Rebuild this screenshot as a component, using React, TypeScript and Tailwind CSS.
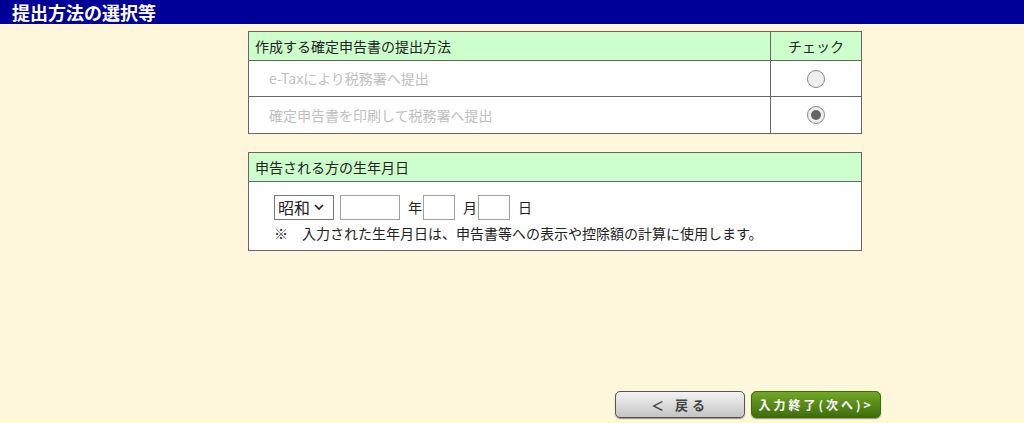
import React, { useState } from 'react';

const Radio: React.FC<{ checked: boolean; onClick: () => void }> = ({ checked, onClick }) => (
  <button
    type="button"
    onClick={onClick}
    className="w-[18px] h-[18px] rounded-full border border-[#8a8a8a] bg-[#efefef] flex items-center justify-center"
  >
    {checked && <span className="block w-[10px] h-[10px] rounded-full bg-[#666666]" />}
  </button>
);

const App: React.FC = () => {
  const [method, setMethod] = useState<'etax' | 'print'>('print');

  return (
    <div
      className="w-[1024px] h-[423px] bg-[#fff7dc] flex flex-col text-[14px] text-[#222]"
      style={{ fontFamily: '"Noto Sans CJK JP", "Noto Sans", sans-serif' }}
    >
      {/* Title bar */}
      <div className="h-[24px] bg-[#000099] flex items-center pl-[12px]">
        <h1 className="text-white font-bold text-[18px] leading-none">提出方法の選択等</h1>
      </div>

      <div className="flex-1 flex flex-col items-start pl-[248px] pt-[7px]">
        {/* Submission method */}
        <table className="w-[614px] border-collapse border border-[#666]">
          <thead>
            <tr className="bg-[#ccffcc] h-[29px]">
              <th className="border border-[#666] text-left font-normal pl-[6px]">作成する確定申告書の提出方法</th>
              <th className="border border-[#666] font-normal w-[91px]">チェック</th>
            </tr>
          </thead>
          <tbody className="bg-white">
            <tr className="h-[36px]">
              <td className="border border-[#666] pl-[20px] text-[#c0c0c0]">e-Taxにより税務署へ提出</td>
              <td className="border border-[#666]">
                <div className="flex justify-center">
                  <Radio checked={method === 'etax'} onClick={() => setMethod('etax')} />
                </div>
              </td>
            </tr>
            <tr className="h-[37px]">
              <td className="border border-[#666] pl-[20px] text-[#c0c0c0]">確定申告書を印刷して税務署へ提出</td>
              <td className="border border-[#666]">
                <div className="flex justify-center">
                  <Radio checked={method === 'print'} onClick={() => setMethod('print')} />
                </div>
              </td>
            </tr>
          </tbody>
        </table>

        {/* Birth date */}
        <div className="w-[614px] mt-[18px] border border-[#666]">
          <div className="h-[29px] bg-[#ccffcc] border-b border-[#666] flex items-center pl-[6px]">
            申告される方の生年月日
          </div>
          <div className="bg-white h-[68px] pl-[25px] pt-[12px]">
            <div className="flex items-center h-[26px]">
              <div className="w-[60px] h-[25px] border border-[#767676] bg-white flex items-center pl-[3px] text-[16px]">
                昭和
                <svg width="12" height="12" viewBox="0 0 12 12" className="ml-[3px]">
                  <path d="M2 4 L6 8 L10 4" stroke="#222" strokeWidth="1.6" fill="none" />
                </svg>
              </div>
              <input className="ml-[6px] w-[60px] h-[25px] border border-[#a0a0a0] bg-white outline-none" />
              <span className="ml-[8px]">年</span>
              <input className="ml-[1px] w-[32px] h-[25px] border border-[#a0a0a0] bg-white outline-none" />
              <span className="ml-[8px]">月</span>
              <input className="ml-[1px] w-[32px] h-[25px] border border-[#a0a0a0] bg-white outline-none" />
              <span className="ml-[8px]">日</span>
            </div>
            <p className="mt-[3px] leading-[20px]">※　入力された生年月日は、申告書等への表示や控除額の計算に使用します。</p>
          </div>
        </div>

        {/* Buttons */}
        <div className="mt-auto mb-[2px] flex gap-[6px] ml-[367px]">
          <button className="w-[130px] h-[27px] rounded-[5px] border border-[#555] bg-gradient-to-b from-[#f4f4f4] to-[#c4c4c4] text-[#444] font-bold text-[13px] tracking-[4px] shadow-[0_1px_1px_rgba(0,0,0,0.4)]">
            ＜ 戻る
          </button>
          <button className="w-[130px] h-[27px] rounded-[5px] border border-[#3d6a0a] bg-gradient-to-b from-[#73a728] to-[#3e6e0c] text-white font-bold text-[12px] tracking-[3px] shadow-[0_1px_1px_rgba(0,0,0,0.4)]">
            入力終了(次へ)&gt;
          </button>
        </div>
      </div>
      <div className="h-[3px] bg-[#fffbc8]" />
    </div>
  );
};

export default App;
